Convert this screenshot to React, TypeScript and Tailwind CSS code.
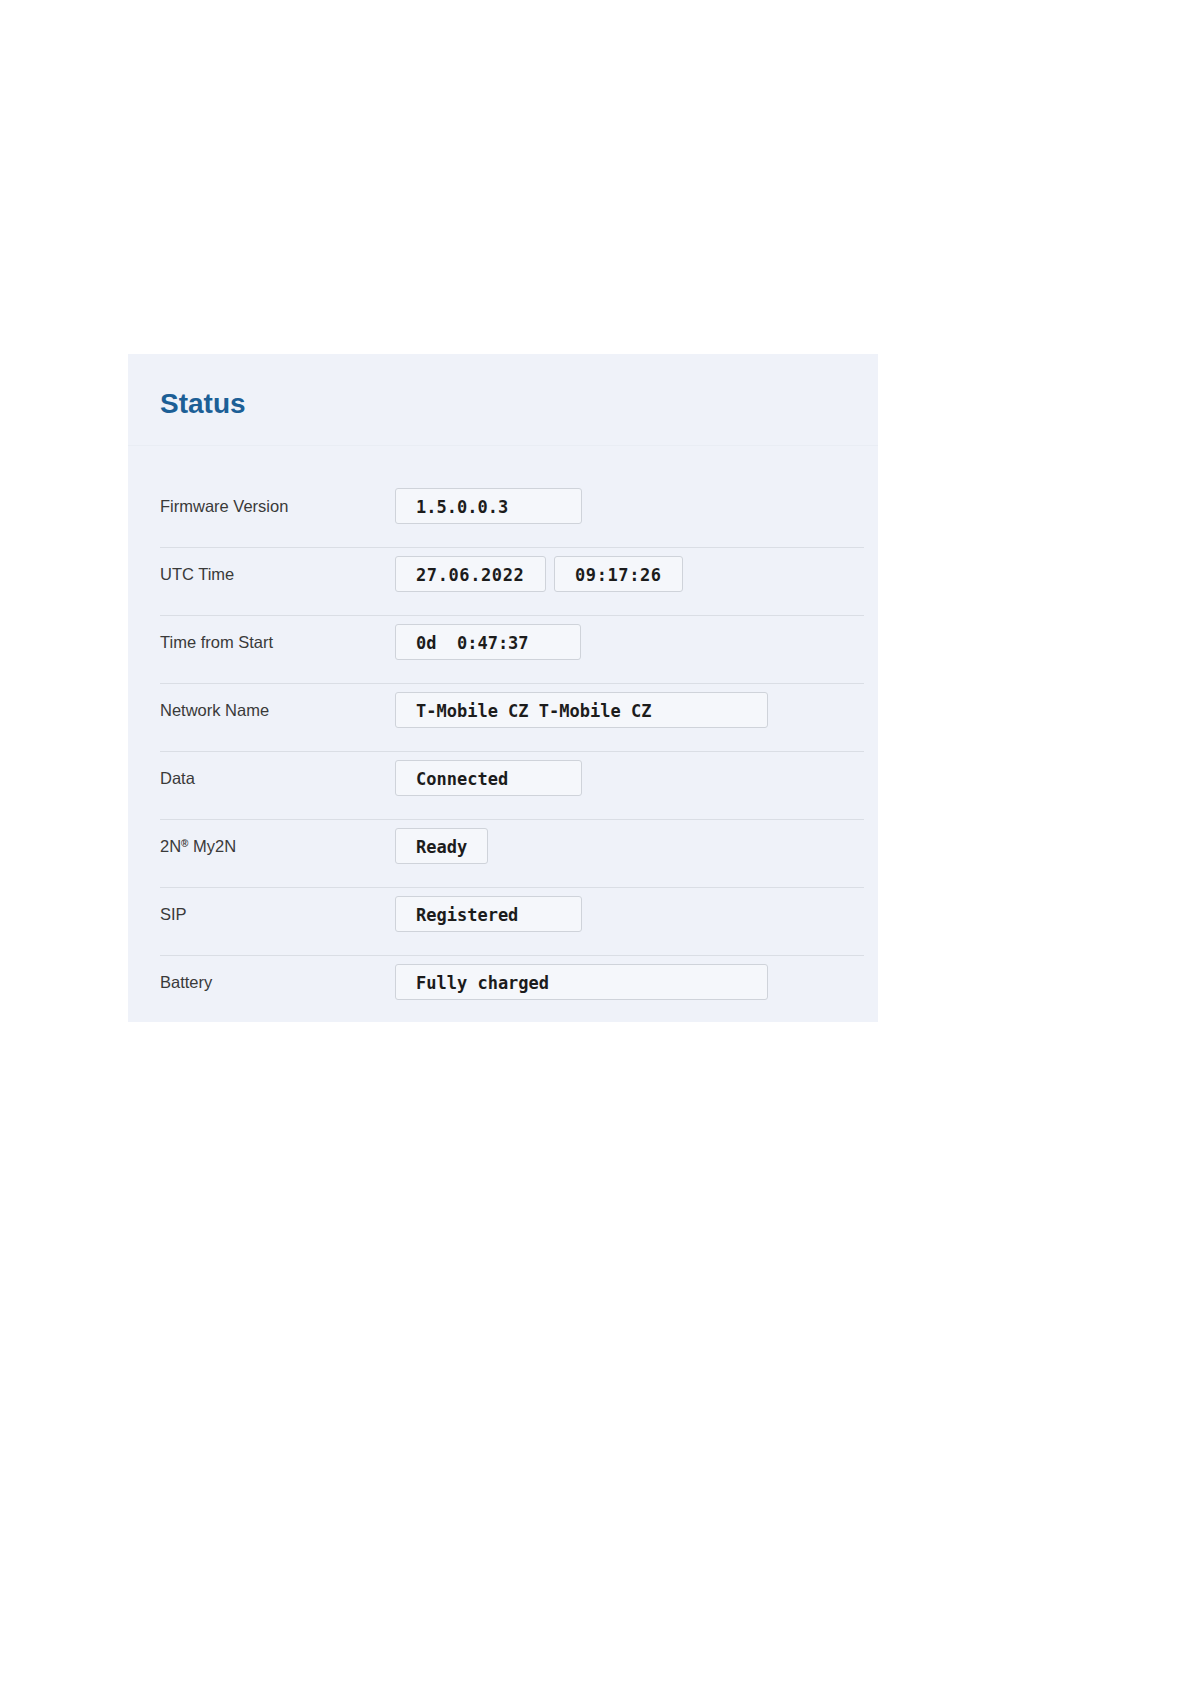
import React from 'react';

type Value = { text: string; width: string; wide?: boolean };

type Row = {
  label: React.ReactNode;
  values: Value[];
};

const rows: Row[] = [
  { label: 'Firmware Version', values: [{ text: '1.5.0.0.3', width: 'w-[187px]' }] },
  {
    label: 'UTC Time',
    values: [
      { text: '27.06.2022', width: 'w-[151px]', wide: true },
      { text: '09:17:26', width: 'w-[129px]', wide: true },
    ],
  },
  { label: 'Time from Start', values: [{ text: '0d  0:47:37', width: 'w-[186px]' }] },
  { label: 'Network Name', values: [{ text: 'T-Mobile CZ T-Mobile CZ', width: 'w-[373px]' }] },
  { label: 'Data', values: [{ text: 'Connected', width: 'w-[187px]' }] },
  {
    label: (
      <>
        2N<sup className="text-[10px] font-bold -top-[0.5em]">®</sup> My2N
      </>
    ),
    values: [{ text: 'Ready', width: 'w-[93px]' }],
  },
  { label: 'SIP', values: [{ text: 'Registered', width: 'w-[187px]' }] },
  { label: 'Battery', values: [{ text: 'Fully charged', width: 'w-[373px]' }] },
];

function ValueBox({ text, width, wide }: Value) {
  return (
    <div
      className={`${width} ${wide ? 'tracking-[0.6px]' : ''} h-[36px] flex items-center pl-[20px] pt-[3px] rounded-[3px] border border-[#cfd3da] bg-[#f5f7fb] text-[17px] font-bold text-[#1c1c1c] whitespace-pre font-['DejaVu_Sans_Mono',monospace]`}
    >
      {text}
    </div>
  );
}

export default function App() {
  return (
    <div className="min-h-screen bg-white pt-[354px] pl-[128px] font-['Liberation_Sans',Arial,sans-serif]">
      <div className="w-[750px] bg-[#eff2f9]">
        {/* Header */}
        <div className="pl-8 pt-[34px] pb-[25px] border-b border-[#e9edf4]">
          <h2 className="text-[28px] leading-[32px] font-bold text-[#1c5f96]">Status</h2>
        </div>

        {/* Rows */}
        <div className="pl-8 pr-[14px] pt-[34px]">
          {rows.map((row, i) => (
            <div
              key={i}
              className="flex items-center pt-2 pb-[23px] border-b border-[#dadee5] last:border-b-0 last:pb-[22px]"
            >
              <div className="w-[235px] text-[16.5px] text-[#3a3a3a]">{row.label}</div>
              <div className="flex gap-[8px]">
                {row.values.map((v, j) => (
                  <ValueBox key={j} {...v} />
                ))}
              </div>
            </div>
          ))}
        </div>
      </div>
    </div>
  );
}
